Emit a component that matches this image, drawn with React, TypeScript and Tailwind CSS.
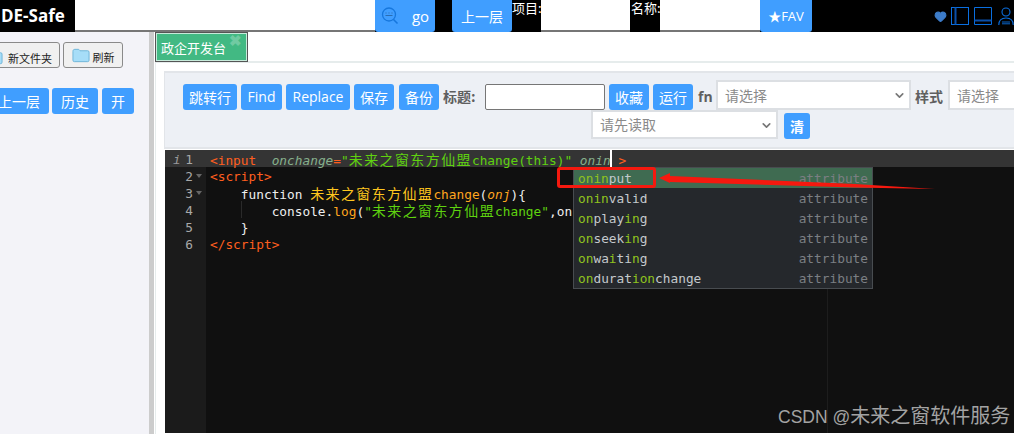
import React from 'react';
import { ChevronDown, Heart } from 'lucide-react';

const CJK = "font-['Noto_Sans_CJK_SC','Open_Sans',sans-serif]";
const UI = "font-['Open_Sans','Noto_Sans_CJK_SC',sans-serif]";

const BlueBtn = ({ w, children, className = '' }: { w: string; children: React.ReactNode; className?: string }) => (
  <button className={`${w} h-[26px] shrink-0 rounded-[3px] bg-[#409eff] text-[14px] leading-none text-white ${className}`}>
    {children}
  </button>
);

const TopBtn = ({ w, children }: { w: string; children: React.ReactNode }) => (
  <button className={`${w} flex h-[32px] shrink-0 items-center justify-center rounded-b-[3px] bg-[#409eff] leading-none text-white`}>
    {children}
  </button>
);

const Folder = () => (
  <svg width="18" height="15" viewBox="0 0 19 15" className="shrink-0">
    <path d="M1 3c0-1 .5-2 2-2h4l1.500 1.500h8c1 0 1.500 .5 1.500 1.500v8.500c0 1-.5 1.500-1.500 1.500h-14c-1 0-1.500-.5-1.500-1.500z" fill="#a6ddf8" stroke="#6db4d8" strokeWidth="1" />
  </svg>
);

const Pick = ({ w, label, h }: { w: string; label: string; h: string }) => (
  <div className={`relative ${w} ${h} shrink-0`}>
    <select className="h-full w-full appearance-none border-2 border-[#dcdfe3] bg-white pl-[7px] text-[14px] text-[#8a8a8a] outline-none">
      <option>{label}</option>
    </select>
    <ChevronDown size={13} strokeWidth={3} className="absolute right-[5px] top-[9px] text-[#777]" />
  </div>
);

// ACE gives a CJK glyph two cells, so it needs a bit of spacing at 14px
const Han = ({ children, color }: { children: string; color: string }) => (
  <span className={`${color} ${CJK} text-[14px] tracking-[1.4px]`}>{children}</span>
);

const Line = ({ n, active, fold, children }: { n: number; active?: boolean; fold?: boolean; children?: React.ReactNode }) => (
  <div className={`flex h-[17px] ${active ? 'bg-[#343434]' : ''}`}>
    <div className={`relative w-[41px] shrink-0 pr-[13px] text-right text-[#a8a8a8] ${active ? 'bg-[#343434]' : 'bg-[#1b1b1b]'}`}>
      {active && <span className="absolute left-[8px] top-0 italic text-[#9a9a9a]">i</span>}
      {n}
      {fold && <span className="absolute right-[4px] top-[7px] h-0 w-0 border-x-[3px] border-t-[4px] border-x-transparent border-t-[#666]" />}
    </div>
    <div className="whitespace-pre pl-[4px]">{children}</div>
  </div>
);

// odd entries are the letters that matched what was typed
const suggestions: string[][] = [
  ['', 'onin', 'put'],
  ['', 'onin', 'valid'],
  ['', 'on', 'play', 'in', 'g'],
  ['', 'on', 'seek', 'in', 'g'],
  ['', 'on', 'wa', 'i', 'ti', 'n', 'g'],
  ['', 'on', 'durat', 'ion', 'change'],
];

export default function App() {
  const tag = 'text-[#ff5f1f]';
  const str = 'text-[#5fd20f]';
  const fn = 'text-[#ffa51f]';
  const attr = 'italic text-[#86b08c]';

  return (
    <div className={`relative h-[434px] w-[1014px] overflow-hidden bg-white ${UI}`}>
      {/* top bar */}
      <header className="flex h-[32px] items-center bg-black text-white">
        <div className="w-[75px] shrink-0 pl-[1px] text-[17px] font-bold leading-[30px]">DE-Safe</div>
        <input className="h-[32px] w-[300px] shrink-0 border-b-2 border-[#767676] bg-white" />
        <TopBtn w="w-[60px] gap-[13px]">
          <svg width="18" height="18" viewBox="0 0 18 18" fill="none" stroke="#1677dd" strokeWidth="1.300">
            <circle cx="8" cy="7.500" r="6.500" />
            <path d="M12.500 12.500L16.500 16.500" strokeWidth="1.600" />
            <path d="M4.500 6h1M7.500 6h1M10.500 6h1M4.500 8.500h7" stroke="#2a6cb0" strokeWidth="1.200" />
          </svg>
          <span className="text-[15px]">go</span>
        </TopBtn>
        <div className="w-[17px] shrink-0" />
        <TopBtn w="w-[60px]"><span className={`text-[14px] ${CJK}`}>上一层</span></TopBtn>
        <span className={`w-[29px] shrink-0 self-start whitespace-nowrap text-[13px] leading-[15px] ${CJK}`}>项目:</span>
        <input className="h-[32px] w-[89px] shrink-0 border-b-2 border-[#767676] bg-white" />
        <span className={`ml-[1px] w-[29px] shrink-0 self-start whitespace-nowrap text-[13px] leading-[15px] ${CJK}`}>名称:</span>
        <input className="h-[32px] w-[100px] shrink-0 border-b-2 border-[#767676] bg-white" />
        <TopBtn w="w-[52px]"><span className="text-[13px]">★FAV</span></TopBtn>
        <div className="ml-auto flex items-center text-[#0a6fe0]">
          <Heart size={13} fill="#3d7cc9" stroke="#3d7cc9" className="mr-[4px]" />
          <svg width="18" height="18" viewBox="0 0 18 18" fill="none" stroke="currentColor" strokeWidth="1" className="mr-[5px]">
            <rect x="0.500" y="0.500" width="17" height="17" />
            <path d="M4.500 .5V17.500" strokeWidth="2" stroke="#0a4fa8" />
          </svg>
          <svg width="18" height="18" viewBox="0 0 18 18" fill="none" stroke="currentColor" strokeWidth="1" className="mr-[6px]">
            <path d="M.5.5H17.500V17.500H.5z" />
            <path d="M.5 13.500H17.500" strokeWidth="2" stroke="#0a4fa8" />
          </svg>
          <svg width="16" height="18" viewBox="0 0 16 18" fill="none" stroke="currentColor" strokeWidth="1.100">
            <circle cx="8" cy="5" r="4" />
            <path d="M.8 18c0-4.500 3-7 7.200-7s7.200 2.500 7.200 7" />
            <path d="M4 15h8M4 16.800h8" strokeWidth="0.900" />
          </svg>
        </div>
      </header>

      <div className="flex h-[402px]">
        {/* file sidebar, its buttons are cut off by the left edge */}
        <aside className={`w-[149px] shrink-0 overflow-hidden bg-[#f3f3f8] pt-[10px] ${CJK}`}>
          <div className="ml-[-15px] flex gap-[3px]">
            <button className="relative flex h-[26px] w-[75px] items-end justify-end rounded-[3px] border border-[#8a8a8a] bg-[#f0f0f0] pb-[1px] pr-[7px] text-[11px] text-[#222]">
              <span className="absolute left-[-1px] top-[7px]"><Folder /></span>
              新文件夹
            </button>
            <button className="flex h-[26px] w-[60px] items-center justify-center gap-[3px] rounded-[3px] border border-[#8a8a8a] bg-[#f0f0f0] text-[11px] text-[#222]">
              <Folder />
              <span className="mt-[5px]">刷新</span>
            </button>
          </div>
          <div className="ml-[-11px] mt-[20px] flex gap-[3px]">
            <BlueBtn w="w-[60px]">上一层</BlueBtn>
            <BlueBtn w="w-[46px]">历史</BlueBtn>
            <BlueBtn w="w-[32px]" className="ml-[1px]">开</BlueBtn>
          </div>
        </aside>
        <div className="w-[5px] shrink-0 bg-[#cccccc]" />
        <div className="w-[1px] shrink-0 bg-white" />

        <main className="min-w-0 flex-1 overflow-hidden">
          {/* tabs */}
          <div className="h-[31px] border-b-2 border-[#e6ecec]">
            <div className="relative h-[30px] w-[93px] border border-[#555] bg-[#42b983] p-0 outline outline-1 -outline-offset-2 outline-white/70">
              <span className={`block pl-[5px] pt-[5px] text-[13px] leading-[20px] text-white ${CJK}`}>政企开发台</span>
              <span className="absolute right-[5px] top-[-3px] text-[15px] font-bold leading-[20px] text-white/25">✖</span>
            </div>
          </div>

          <div className="h-full border-l border-[#e6ecec] pt-[8px]">
            {/* toolbar */}
            <section className={`ml-[8px] h-[78px] w-[900px] border-y-2 border-l border-[#e2e5e9] bg-[#edf0f5] ${CJK}`}>
              <div className="flex h-[36px] items-end gap-[4px] pl-[18px]">
                <BlueBtn w="w-[54px]" className="mb-[-1px]">跳转行</BlueBtn>
                <BlueBtn w="w-[41px]" className={`mb-[-1px] ${UI}`}>Find</BlueBtn>
                <BlueBtn w="w-[64px]" className={`mb-[-1px] ${UI}`}>Replace</BlueBtn>
                <BlueBtn w="w-[40px]" className="mb-[-1px]">保存</BlueBtn>
                <BlueBtn w="w-[40px]" className="mb-[-1px] ml-[1px]">备份</BlueBtn>
                <span className="mb-[2px] w-[38px] shrink-0 whitespace-nowrap text-[14px] font-bold text-[#5f5f5f]">标题:</span>
                <input className="mb-[-1px] h-[26px] w-[120px] shrink-0 rounded-[2px] border border-[#767676] bg-white" />
                <BlueBtn w="w-[40px]" className="mb-[-1px]">收藏</BlueBtn>
                <BlueBtn w="w-[40px]" className="mb-[-1px]">运行</BlueBtn>
                <span className={`mb-[2px] ml-[1px] w-[14px] shrink-0 text-[14px] font-bold text-[#5f5f5f] ${UI}`}>fn</span>
                <Pick w="w-[195px]" h="h-[30px] mb-[-1px]" label="请选择" />
                <span className="mb-[2px] w-[29px] shrink-0 whitespace-nowrap text-[14px] font-bold text-[#5f5f5f]">样式</span>
                <Pick w="w-[120px]" h="h-[30px] mb-[-1px]" label="请选择" />
              </div>
              <div className="ml-[426px] mt-[1px] flex items-start gap-[6px]">
                <Pick w="w-[187px]" h="h-[29px]" label="请先读取" />
                <BlueBtn w="w-[26px]" className="mt-[3px] font-bold">清</BlueBtn>
              </div>
            </section>

            {/* editor */}
            <section className="relative ml-[9px] mt-[1px] h-[283px] bg-[#101010] font-['DejaVu_Sans_Mono',monospace] text-[12.8px] leading-[19px] text-[#eeeeee]">
              <div className="absolute bottom-0 left-0 top-0 w-[41px] bg-[#1b1b1b]" />
              <div className="absolute bottom-0 left-[662px] top-[17px] w-px bg-[#1d1d1d]" />
              <div className="absolute left-[76px] top-[51px] h-[17px] w-px bg-[#2a2a2a]" />
              <div className="relative">
                <Line n={1} active>
                  <span className={tag}>&lt;input</span>
                  {'  '}
                  <span className={attr}>onchange</span>
                  <span className={tag}>=</span>
                  <span className={str}>"</span>
                  <Han color={str}>未来之窗东方仙盟</Han>
                  <span className={str}>change(this)"</span>
                  {' '}
                  <span className={attr}>onin</span>
                  <span className="ml-[-1px] mr-[-1px] inline-block h-[17px] w-[2px] bg-white align-top" />
                  {' '}
                  <span className={tag}>&gt;</span>
                </Line>
                <Line n={2} fold><span className={tag}>&lt;script&gt;</span></Line>
                <Line n={3} fold>
                  {'    function '}
                  <Han color="text-[#ffc71f]">未来之窗东方仙盟</Han>
                  <span className={fn}>change</span>(<span className={`italic ${fn}`}>onj</span>){'{'}
                </Line>
                <Line n={4}>
                  {'        console.'}
                  <span className={fn}>log</span>(<span className={str}>"</span>
                  <Han color={str}>未来之窗东方仙盟</Han>
                  <span className={str}>change"</span>,on
                </Line>
                <Line n={5}>{'    }'}</Line>
                <Line n={6}><span className={tag}>&lt;/script&gt;</span></Line>
              </div>

              {/* autocomplete popup */}
              <div className="absolute left-[408px] top-[17px] w-[300px] border border-[#484c50] bg-[#25282c] leading-[21px]">
                {suggestions.map((parts, i) => (
                  <div key={i} className={`flex h-[20px] justify-between px-[4px] ${i === 0 ? 'bg-[#3f6b51]' : ''}`}>
                    <span className="text-[#c4c9cc]">
                      {parts.map((part, j) => (
                        <span key={j} className={j % 2 === 1 ? 'text-[#8fc31e]' : ''}>{part}</span>
                      ))}
                    </span>
                    <span className="text-[#7b7f83]">attribute</span>
                  </div>
                ))}
              </div>
            </section>
          </div>
        </main>
      </div>

      {/* red marker drawn over the screenshot */}
      <div className="absolute left-[557px] top-[167px] h-[21px] w-[99px] rounded-[3px] border-[3px] border-[#f5190f]" />
      <svg width="290" height="30" viewBox="0 0 290 30" className="absolute left-[655px] top-[165px]">
        <path d="M4 13L15 8L15 11L200 19L280 24L200 22.500L15 17L15 18z" fill="#f5190f" />
      </svg>

      <div className="absolute left-[778px] top-[402px] whitespace-nowrap leading-[26px] text-[#a3a3a3]">
        <span className="font-['Liberation_Sans',sans-serif] text-[17.5px]">CSDN @</span>
        <span className={`${CJK} text-[20px]`}>未来之窗软件服务</span>
      </div>
    </div>
  );
}
